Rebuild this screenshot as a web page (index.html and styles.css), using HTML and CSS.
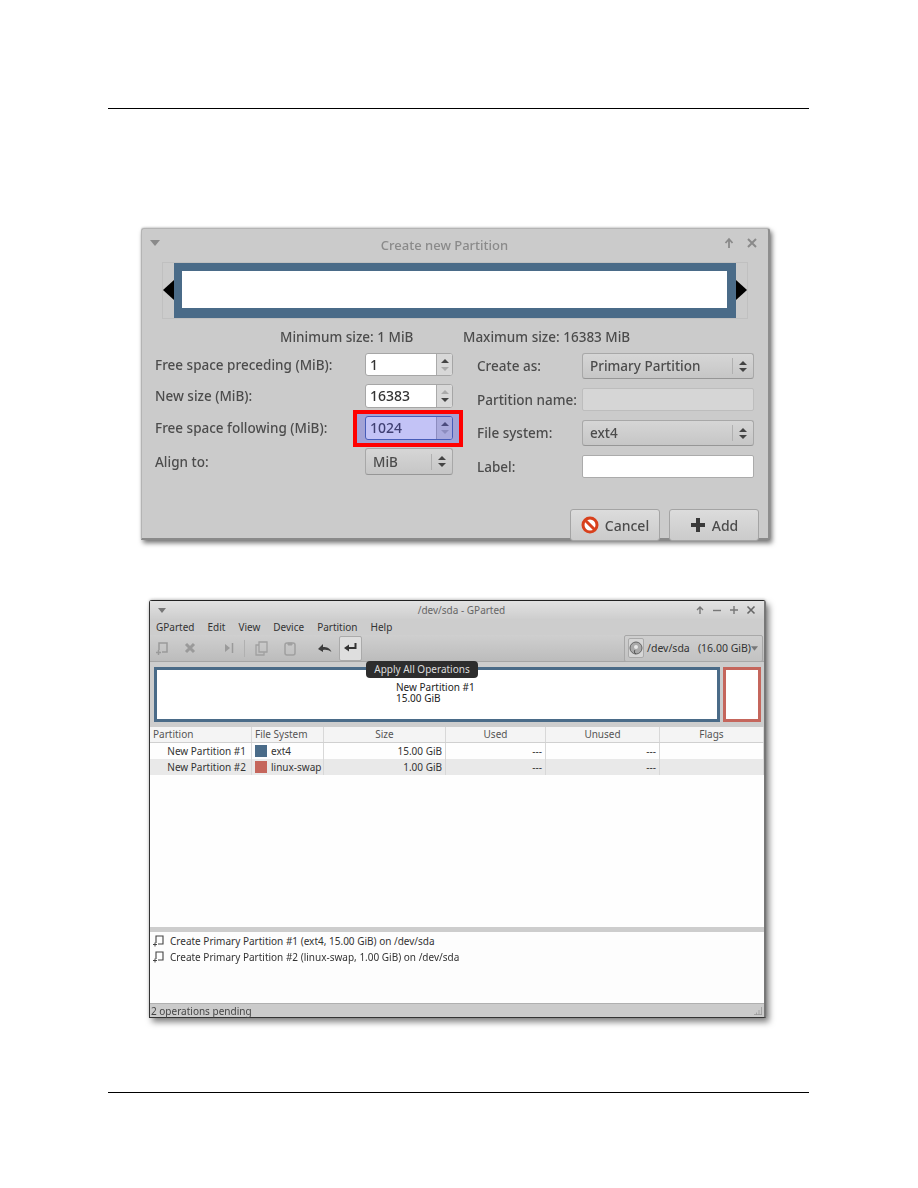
FILE: index.html
```html
<!DOCTYPE html>
<html lang="en">
<head>
<meta charset="utf-8">
<title>GParted</title>
<link rel="stylesheet" href="styles.css">
</head>
<body>
<div class="page">
  <div class="rule rule-top"></div>

  <section class="dialog">
    <div class="dlg-title">
      <svg class="menu-tri" width="10" height="6" viewBox="0 0 10 6"><path d="M0 0h10L5 6z" fill="#8a8a8a"/></svg>
      <span class="dlg-title-text">Create new Partition</span>
      <svg class="wbtn" width="12" height="12" viewBox="0 0 12 12"><path d="M6 11V3M2.500 6 6 2l3.500 4" fill="none" stroke="#8a8a8a" stroke-width="1.800"/></svg>
      <svg class="wbtn" width="12" height="12" viewBox="0 0 12 12"><path d="M2 2l8 8M10 2l-8 8" fill="none" stroke="#8a8a8a" stroke-width="2"/></svg>
    </div>

    <div class="resizer">
      <i class="arrow arrow-l"></i>
      <div class="resizer-bar"><div class="resizer-inner"></div></div>
      <i class="arrow arrow-r"></i>
    </div>

    <div class="sizes">
      <span class="size-min">Minimum size: 1 MiB</span>
      <span class="size-max">Maximum size: 16383 MiB</span>
    </div>

    <div class="form">
      <div class="col col-left">
        <div class="row r1"><label>Free space preceding (MiB):</label>
          <div class="spin"><span class="spin-val">1</span><span class="spin-btn"><b class="up"></b><b class="down dim"></b></span></div></div>
        <div class="row r2"><label>New size (MiB):</label>
          <div class="spin"><span class="spin-val">16383</span><span class="spin-btn"><b class="up dim"></b><b class="down"></b></span></div></div>
        <div class="row r3"><label>Free space following (MiB):</label>
          <div class="spin spin-focus"><span class="spin-val">1024</span><span class="spin-btn"><b class="up"></b><b class="down dim"></b></span>
            <div class="highlight"></div></div></div>
        <div class="row r4"><label>Align to:</label>
          <div class="combo combo-small"><span class="combo-val">MiB</span><span class="combo-btn"><b class="up"></b><b class="down"></b></span></div></div>
      </div>
      <div class="col col-right">
        <div class="row q1"><label>Create as:</label>
          <div class="combo combo-wide"><span class="combo-val">Primary Partition</span><span class="combo-btn"><b class="up"></b><b class="down"></b></span></div></div>
        <div class="row q2"><label>Partition name:</label><div class="entry entry-off"></div></div>
        <div class="row q3"><label>File system:</label>
          <div class="combo combo-wide"><span class="combo-val">ext4</span><span class="combo-btn"><b class="up"></b><b class="down"></b></span></div></div>
        <div class="row q4"><label>Label:</label><div class="entry"></div></div>
      </div>
    </div>

    <div class="actions">
      <button class="btn" type="button">
        <svg width="18" height="18" viewBox="0 0 18 18"><circle cx="9" cy="9" r="7" fill="#fff" stroke="#d8401c" stroke-width="3"/><path d="M4 4l10 10" stroke="#d8401c" stroke-width="3"/></svg>
        <span>Cancel</span>
      </button>
      <button class="btn" type="button">
        <svg width="16" height="16" viewBox="0 0 16 16"><path d="M6 1h4v5h5v4h-5v5H6v-5H1V6h5z" fill="#3a3a3a"/></svg>
        <span>Add</span>
      </button>
    </div>
  </section>

  <section class="gparted">
    <div class="gp-title">
      <svg class="gp-tri" width="8" height="5" viewBox="0 0 8 5"><path d="M0 0h8L4 5z" fill="#777"/></svg>
      <span class="gp-title-text">/dev/sda - GParted</span>
      <div class="gp-wbtns">
        <svg width="10" height="10" viewBox="0 0 10 10"><path d="M5 9V2M2 5l3-3 3 3" fill="none" stroke="#777" stroke-width="1.400"/></svg>
        <svg width="10" height="10" viewBox="0 0 10 10"><path d="M1 5.500h8" stroke="#777" stroke-width="1.400"/></svg>
        <svg width="10" height="10" viewBox="0 0 10 10"><path d="M1 5h8M5 1v8" stroke="#777" stroke-width="1.400"/></svg>
        <svg width="10" height="10" viewBox="0 0 10 10"><path d="M1.500 1.500l7 7M8.500 1.500l-7 7" stroke="#666" stroke-width="1.600"/></svg>
      </div>
    </div>

    <nav class="menubar"><span>GParted</span><span>Edit</span><span>View</span><span>Device</span><span>Partition</span><span>Help</span></nav>

    <div class="toolbar">
      <span class="tool t-new"><svg width="14" height="15" viewBox="0 0 14 15"><path d="M4 9V2h8v9H7" fill="none" stroke="#9a9a9a" stroke-width="1.500"/><path d="M1 11.500h5M3.500 9v5" stroke="#9a9a9a" stroke-width="1.500"/></svg></span>
      <span class="tool t-del"><svg width="12" height="12" viewBox="0 0 12 12"><path d="M2 2l8 8M10 2l-8 8" stroke="#9a9a9a" stroke-width="3"/></svg></span>
      <span class="tool t-fwd"><svg width="14" height="10" viewBox="0 0 14 10"><path d="M0 5h5V1l5 4-5 4V5" fill="#9a9a9a"/><path d="M12.500 0v10" stroke="#9a9a9a" stroke-width="1.500"/></svg></span>
      <i class="tool-sep"></i>
      <span class="tool t-copy"><svg width="13" height="15" viewBox="0 0 13 15"><path d="M4 1h8v10H4zM4 4H1v10h8v-3" fill="none" stroke="#a0a0a0" stroke-width="1.300"/></svg></span>
      <span class="tool t-paste"><svg width="12" height="15" viewBox="0 0 12 15"><rect x="1" y="2" width="10" height="12" rx="2" fill="none" stroke="#a0a0a0" stroke-width="1.500"/><path d="M4 2h4v2H4z" fill="#a0a0a0" stroke="#a0a0a0"/></svg></span>
      <span class="tool t-undo"><svg width="14" height="10" viewBox="0 0 14 10"><path d="M0 6l5-5v3c4 0 7 1 8.500 5C11 7 8 6.500 5 7v2z" fill="#3c3c3c"/></svg></span>
      <span class="tool t-apply"><svg width="13" height="10" viewBox="0 0 13 10"><path d="M11.500 0v5H4" fill="none" stroke="#333" stroke-width="2"/><path d="M5 1.500v7L0 5z" fill="#333"/></svg></span>
      <div class="device">
        <span class="disk"><svg width="14" height="14" viewBox="0 0 14 14"><circle cx="7" cy="7" r="6" fill="#aaa" stroke="#666"/><circle cx="7" cy="6" r="2" fill="#e8e8e8"/><path d="M7 13c-2-1-2-3-1-4" stroke="#555" fill="none"/></svg></span>
        <span class="device-text">/dev/sda&nbsp;&nbsp;&nbsp;(16.00 GiB)</span>
        <svg class="device-tri" width="8" height="5" viewBox="0 0 8 5"><path d="M0 0h8L4 5z" fill="#777"/></svg>
      </div>
      <div class="tooltip">Apply All Operations</div>
    </div>

    <div class="gp-bars">
      <div class="pbar pbar-1"><div class="pbar-text">New Partition #1<br>15.00 GiB</div></div>
      <div class="pbar pbar-2"></div>
    </div>

    <div class="table">
      <div class="tr th"><span class="c1">Partition</span><span class="c2">File System</span><span class="c3">Size</span><span class="c4">Used</span><span class="c5">Unused</span><span class="c6">Flags</span></div>
      <div class="tr"><span class="c1 name">New Partition #1</span><span class="c2"><i class="sw sw-blue"></i>ext4</span><span class="c3 num">15.00 GiB</span><span class="c4 num">---</span><span class="c5 num">---</span><span class="c6"></span></div>
      <div class="tr alt"><span class="c1 name">New Partition #2</span><span class="c2"><i class="sw sw-red"></i>linux-swap</span><span class="c3 num">1.00 GiB</span><span class="c4 num">---</span><span class="c5 num">---</span><span class="c6"></span></div>
    </div>

    <div class="pane-split"></div>

    <div class="log">
      <div class="log-row"><svg width="11" height="12" viewBox="0 0 11 12"><path d="M3 8V1h7v8H5" fill="none" stroke="#444" stroke-width="1.100"/><path d="M0 9.500h4M2 7.500v4" stroke="#444"/></svg><span>Create Primary Partition #1 (ext4, 15.00 GiB) on /dev/sda</span></div>
      <div class="log-row"><svg width="11" height="12" viewBox="0 0 11 12"><path d="M3 8V1h7v8H5" fill="none" stroke="#444" stroke-width="1.100"/><path d="M0 9.500h4M2 7.500v4" stroke="#444"/></svg><span>Create Primary Partition #2 (linux-swap, 1.00 GiB) on /dev/sda</span></div>
    </div>

    <div class="status"><span>2 operations pending</span>
      <svg width="8" height="8" viewBox="0 0 8 8"><path d="M7.500 0v8M5 8V3M2.500 8V5.500M0 7.500h8" stroke="#999" stroke-width=".8"/></svg>
    </div>
  </section>

  <div class="rule rule-bottom"></div>
</div>
</body>
</html>
```

FILE: styles.css
```css
* { box-sizing: border-box; }
html, body { margin: 0; padding: 0; background: #fff; }
body { font-family: "Noto Sans", "Open Sans", sans-serif; color: #3c3c3c; }
.page { width: 918px; height: 1188px; padding-top: 108px; display: flex; flex-direction: column; overflow: hidden; }
.rule { height: 1px; background: #000; margin: 0 109px 0 108px; flex: none; }
.rule-top { margin-bottom: 119px; }
.rule-bottom { margin-top: 74px; }

/* Dialog */
.dialog { flex: none; width: 629px; height: 312px; margin-left: 141px; background: #cbcbcb; border: 1px solid #b4b4b4; border-bottom: 2px solid #8a8a8a; border-right: 2px solid #8e8e8e; border-radius: 3px 3px 0 0; box-shadow: 2px 3px 5px rgba(0,0,0,.55), 0 -1px 2px rgba(0,0,0,.15); font-size: 13.500px; font-weight: 500; color: #4c4c4c; filter: blur(.35px); }
.dlg-title { height: 33px; display: flex; align-items: flex-start; padding: 9px 10px 0 8px; gap: 11px; }
.dlg-title-text { flex: 1; text-align: center; color: #8a8a8a; font-size: 13px; line-height: 16px; padding-left: 6px; margin-top: -1px; }
.menu-tri { margin-top: 2px; }
.wbtn { margin-top: -1px; }
.resizer { width: 586px; height: 57px; margin-left: 20px; border: 1px solid #c0c0c0; display: flex; align-items: center; position: relative; }
.resizer-bar { width: 562px; height: 55px; background: #4a6b88; padding: 8px 9px 10px 8px; margin-left: 11px; }
.resizer-inner { width: 100%; height: 100%; background: #fff; }
.arrow { position: absolute; top: 17px; width: 0; height: 0; border-top: 10px solid transparent; border-bottom: 10px solid transparent; }
.arrow-l { left: 0; border-right: 11px solid #000; }
.arrow-r { right: 0; border-left: 11px solid #000; }
.sizes { height: 34px; display: flex; align-items: center; padding-top: 1px; }
.size-min { margin-left: 138px; width: 183px; }
.col { position: relative; }
.form { display: grid; grid-template-columns: 321px 1fr; height: 143px; }
.col { display: flex; flex-direction: column; }
.row { display: flex; align-items: center; }
.row label { flex: none; }
.col-left { padding-left: 13px; }
.col-left label { width: 210px; }
.col-right { padding-left: 14px; }
.col-right label { width: 105px; }
.r1 { height: 23px; margin-top: 0; }
.r2 { height: 24px; margin-top: 8px; }
.r3 { height: 24px; margin-top: 8px; }
.r4 { height: 27px; margin-top: 8px; }
.q1 { height: 26px; }
.q2 { height: 23px; margin-top: 9px; }
.q3 { height: 26px; margin-top: 9px; }
.q4 { height: 23px; margin-top: 9px; }
.spin { width: 88px; height: 100%; display: flex; border: 1px solid #a6a6a6; border-radius: 3px; background: #fff; position: relative; color: #333; }
.spin-val { flex: 1; padding-left: 4px; line-height: 22px; font-size: 14px; }
.spin-btn { width: 16px; border-left: 1px solid #aaa; background: #d8d8d8; display: flex; flex-direction: column; align-items: center; justify-content: center; gap: 4px; border-radius: 0 2px 2px 0; }
.up, .down { display: block; width: 0; height: 0; border-left: 4px solid transparent; border-right: 4px solid transparent; }
.up { border-bottom: 4px solid #444; }
.down { border-top: 4px solid #444; }
.up.dim { border-bottom-color: #aaa; }
.down.dim { border-top-color: #aaa; }
.spin-focus { border-color: #3e5f9e; }
.highlight { position: absolute; left: -13px; top: -7px; width: 110px; height: 37px; border: 4px solid #f00; background: rgba(90, 90, 230, .36); }
.combo { height: 100%; display: flex; align-items: center; border: 1px solid #a8a8a8; border-bottom-color: #969696; border-radius: 3px; background: linear-gradient(#d6d6d6, #c6c6c6); }
.combo-small { width: 88px; }
.combo-wide { width: 172px; }
.combo-val { flex: 1; padding-left: 7px; }
.combo-btn { width: 21px; height: 16px; border-left: 1px solid #b0b0b0; display: flex; flex-direction: column; align-items: center; justify-content: center; gap: 3px; }
.entry { width: 172px; height: 100%; background: #fff; border: 1px solid #ababab; border-radius: 2px; }
.entry-off { background: #d6d6d6; border-color: #bdbdbd; }
.actions { display: flex; justify-content: flex-end; gap: 9px; padding-right: 9px; margin-top: 13px; }
.btn { width: 90px; height: 32px; display: flex; align-items: center; justify-content: center; gap: 6px; border: 1px solid #a4a4a4; border-radius: 3px; background: linear-gradient(#dcdcdc, #cbcbcb); font: inherit; color: #4c4c4c; padding: 0; font-size: 14px; }

/* GParted window */
.gparted { flex: none; width: 617px; height: 418px; margin: 60px 0 0 149px; background: #fff; border: 1px solid #333; border-top-color: #222; border-right: 2px solid #777; border-radius: 3px 3px 0 0; box-shadow: 3px 4px 6px rgba(0,0,0,.5), 0 -1px 3px rgba(0,0,0,.2); font-size: 10px; color: #333; display: flex; flex-direction: column; filter: blur(.3px); }
.gp-title { height: 18px; flex: none; display: flex; align-items: center; padding: 0 8px; background: linear-gradient(#e2e2e2, #cecece); color: #666; }
.gp-tri { flex: none; }
.gp-title-text { flex: 1; text-align: center; padding-left: 62px; }
.gp-wbtns { display: flex; gap: 7px; }
.menubar { height: 16px; flex: none; display: flex; gap: 13px; align-items: center; padding-left: 6px; background: #cdcdcd; }
.toolbar { height: 27px; flex: none; position: relative; display: flex; align-items: center; background: linear-gradient(#cfcfcf, #bcbcbc); border-bottom: 1px solid #a5a5a5; }
.tool { display: flex; align-items: center; justify-content: center; flex: none; }
.t-new { margin-left: 5px; width: 14px; }
.t-del { margin-left: 15px; width: 12px; }
.t-fwd { margin-left: 24px; width: 14px; }
.tool-sep { width: 1px; height: 17px; background: #b0b0b0; margin-left: 10px; }
.t-copy { margin-left: 10px; width: 13px; }
.t-paste { margin-left: 16px; width: 12px; }
.t-undo { margin-left: 22px; width: 14px; }
.t-apply { margin-left: 7px; width: 23px; height: 25px; background: #dedede; border: 1px solid #aaa; border-radius: 2px; }
.device { margin-left: auto; margin-right: 1px; width: 139px; height: 27px; display: flex; align-items: center; border: 1px solid #a8a8a8; border-radius: 2px; background: linear-gradient(#cfcfcf, #c2c2c2); padding-left: 3px; font-size: 10.500px; }
.disk { width: 18px; height: 20px; display: flex; align-items: center; justify-content: center; border: 1px solid #aaa; border-radius: 2px; background: #d6d6d6; }
.device-text { flex: 1; padding-left: 3px; white-space: nowrap; }
.device-tri { margin-right: 4px; }
.tooltip { position: absolute; left: 216px; top: 26px; width: 112px; height: 17px; z-index: 2; border-radius: 4px; background: #2d2d2d; color: #ddd; text-align: center; line-height: 16px; font-size: 10px; white-space: nowrap; }
.gp-bars { height: 65px; flex: none; display: flex; gap: 3px; padding: 5px 3px 5px 4px; background: #cdcdcd; }
.pbar { height: 55px; background: #fff; border: 3px solid #4a6b88; }
.pbar-1 { width: 566px; padding: 12px 0 0 239px; line-height: 11px; color: #222; }
.pbar-2 { width: 38px; border-color: #c5665c; }
.table { flex: 1; background: #fefefe; }
.tr { height: 16px; display: flex; line-height: 15px; }
.tr > span { flex: none; height: 100%; border-right: 1px solid #d8d8d8; padding: 0 3px; white-space: nowrap; display: flex; align-items: center; }
.th { height: 16px; background: #f4f4f4; border-bottom: 1px solid #d0d0d0; color: #555; }
.th .c3, .th .c4, .th .c5, .th .c6 { justify-content: center; }
.alt { background: #e9e9e9; }
.c1 { width: 102px; }
.c2 { width: 72px; }
.c3 { width: 122px; }
.c4 { width: 100px; }
.c5 { width: 114px; }
.c6 { width: 104px; }
.name { justify-content: flex-end; padding-right: 5px !important; }
.num { justify-content: flex-end; }
.sw { width: 12px; height: 12px; margin-right: 4px; flex: none; }
.sw-blue { background: #4a6b88; }
.sw-red { background: #c5665c; }
.pane-split { height: 5px; flex: none; background: #cdcdcd; }
.log { height: 71px; flex: none; background: #fdfdfd; padding-top: 1px; }
.log-row { height: 16px; display: flex; align-items: center; gap: 6px; padding-left: 3px; color: #333; }
.status { height: 14px; flex: none; display: flex; align-items: center; justify-content: space-between; padding: 0 2px 0 1px; background: #cbcbcb; border-top: 1px solid #b0b0b0; color: #444; }
```
